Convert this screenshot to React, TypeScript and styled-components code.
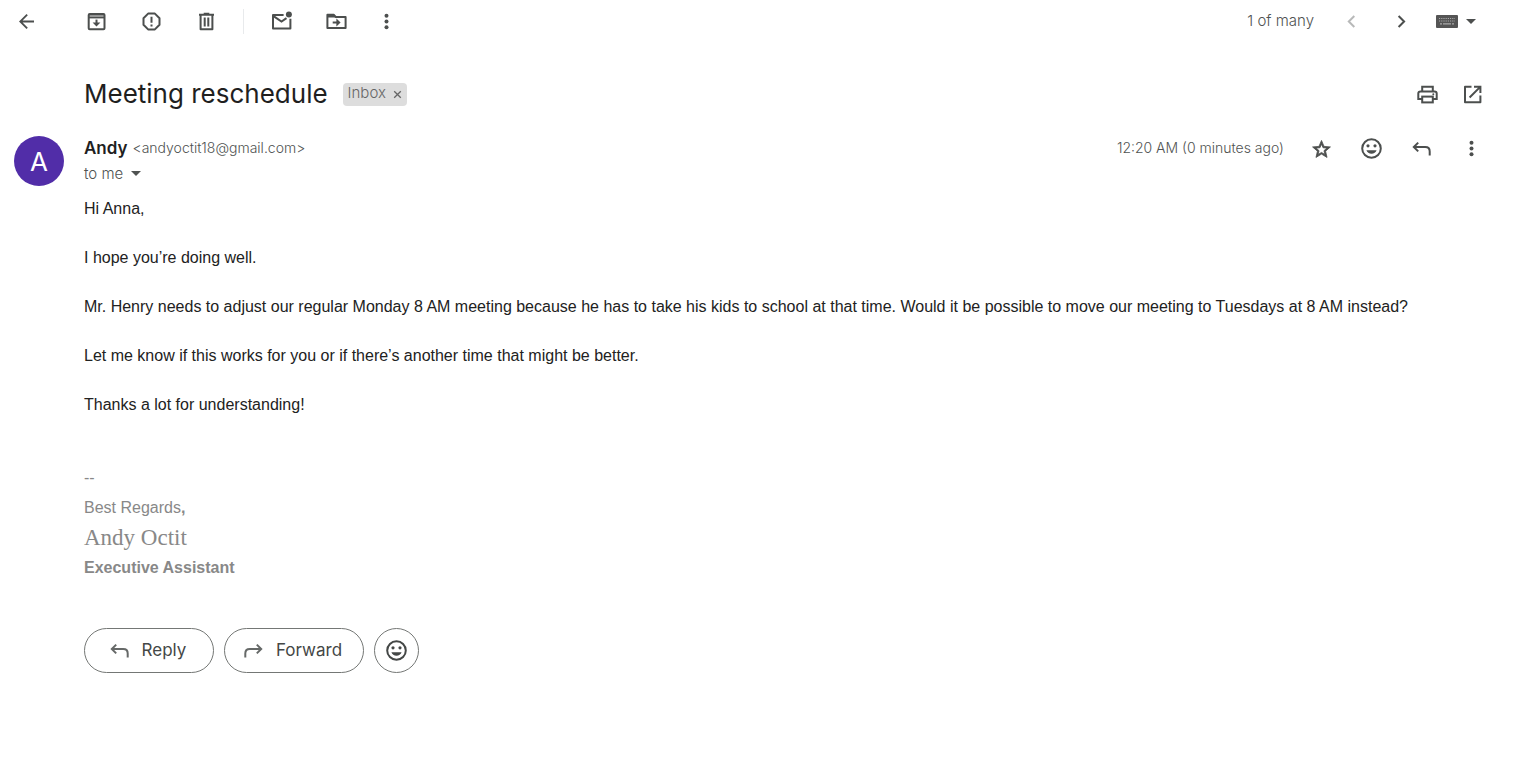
import React from "react";
import styled, { createGlobalStyle } from "styled-components";

const UI_FONT = `Inter, Roboto, "Liberation Sans", sans-serif`;
const BODY_FONT = `"Liberation Sans", Arial, sans-serif`;

const GlobalStyle = createGlobalStyle`
  *, *::before, *::after { box-sizing: border-box; }
  body { margin: 0; background: #fff; color: #222; font-family: ${UI_FONT}; }
  button { font: inherit; color: inherit; }
`;

const Toolbar = styled.header`
  display: flex;
  align-items: center;
  height: 43px;
  padding: 0 47px 0 14px;
  color: #505352;
`;

const ToolGroup = styled.div<{ $gap: number; $start?: number }>`
  display: flex;
  align-items: center;
  gap: ${(p) => p.$gap}px;
  margin-left: ${(p) => p.$start ?? 0}px;
`;

const Divider = styled.span`
  width: 1px;
  height: 25px;
  margin: 0 25px 0 24px;
  background: #e8eaec;
`;

const Spacer = styled.div`
  flex: 1;
`;

const IconButton = styled.button<{ $muted?: boolean }>`
  display: flex;
  flex: none;
  padding: 0;
  border: 0;
  background: none;
  cursor: pointer;
  color: ${(p) => (p.$muted ? "#b8b9b9" : "#4c4f4e")};
`;

const Counter = styled.span`
  margin-right: 25px;
  padding-bottom: 2px;
  font-size: 15px;
  line-height: 20px;
  font-weight: 300;
  color: #505352;
`;

const InputToolButton = styled(IconButton)`
  align-items: center;
  gap: 8px;
  margin-left: 22px;
`;

const SubjectRow = styled.div`
  display: flex;
  align-items: center;
  height: 50px;
  margin-top: 26px;
  padding: 0 38px 0 84px;
`;

const Subject = styled.h1`
  margin: 0;
  font-size: 26px;
  line-height: 36px;
  font-weight: 400;
  color: #1f1f1f;
`;

const Label = styled.span`
  display: flex;
  align-items: center;
  gap: 7px;
  height: 23px;
  margin-left: 15px;
  padding: 0 5px 2px;
  border-radius: 4px;
  background: #ddd;
  color: #666;
  font-size: 15px;
  line-height: 20px;
  font-weight: 300;
`;

const RemoveButton = styled(IconButton)`
  padding-top: 2px;
  color: #666;
`;

const Message = styled.article`
  display: grid;
  grid-template-columns: 50px minmax(0, 1fr);
  column-gap: 20px;
  margin-top: 17px;
  padding: 0 39px 24px 14px;
`;

const Avatar = styled.div`
  display: flex;
  align-items: center;
  justify-content: center;
  width: 50px;
  height: 50px;
  border-radius: 50%;
  background: #512da8;
  color: #fff;
  font-size: 26px;
  font-weight: 400;
`;

const SenderRow = styled.div`
  display: flex;
  align-items: center;
  height: 25px;
`;

const Sender = styled.h2`
  margin: 0 5px 0 0;
  padding-bottom: 2px;
  font-size: 17px;
  line-height: 24px;
  font-weight: 600;
  color: #1f1f1f;
`;

const Muted = styled.span`
  padding-bottom: 1px;
  font-size: 14px;
  line-height: 20px;
  font-weight: 300;
  color: #505352;
`;

const RecipientButton = styled.button`
  display: flex;
  align-items: center;
  gap: 8px;
  height: 25px;
  padding: 0 0 1px;
  border: 0;
  background: none;
  color: #505352;
  font-size: 15px;
  font-weight: 300;
  cursor: pointer;
`;

const Body = styled.div`
  display: grid;
  row-gap: 25px;
  margin-top: 11px;
  font-family: ${BODY_FONT};
  font-size: 16px;
  line-height: 24px;
`;

const Paragraph = styled.p`
  margin: 0;
`;

const Signature = styled.footer`
  margin-top: 46px;
  font-family: ${BODY_FONT};
  font-size: 16px;
  line-height: 30px;
  color: #888;
`;

const SignatureLine = styled.div`
  height: 30px;
`;

const SignatureName = styled(SignatureLine)`
  font-family: "Liberation Serif", "Times New Roman", serif;
  font-size: 23px;
`;

const Actions = styled.div`
  display: flex;
  gap: 10px;
  margin-top: 45px;
`;

const PillButton = styled.button<{ $width: number }>`
  display: flex;
  align-items: center;
  justify-content: center;
  gap: 10px;
  width: ${(p) => p.$width}px;
  height: 45px;
  padding: 0 5px 0 0;
  border: 1px solid #747775;
  border-radius: 23px;
  background: #fff;
  color: #444746;
  font-size: 17px;
  line-height: 24px;
  cursor: pointer;

  svg {
    color: #666968;
  }
`;

const PillText = styled.span`
  padding-bottom: 2px;
`;

const RoundButton = styled(PillButton)`
  padding: 0;

  svg {
    color: #444746;
  }
`;

type GlyphProps = { children: React.ReactNode; box?: string; w?: number; h?: number };

const Glyph = ({ children, box = "0 0 25 25", w = 25, h = 25 }: GlyphProps) => (
  <svg width={w} height={h} viewBox={box} fill="none" stroke="currentColor" strokeWidth="2" aria-hidden="true">
    {children}
  </svg>
);

const BackIcon = () => (
  <Glyph box="0 0 20 20">
    <path fill="currentColor" stroke="none" d="M16 9.25H6.87l4.19-4.19L10 4l-6 6 6 6 1.06-1.06-4.19-4.19H16z" />
  </Glyph>
);

const ArchiveIcon = () => (
  <Glyph>
    <rect x="4.7" y="4.9" width="15.8" height="15.4" rx="1" />
    <path d="M5 6.8h15" strokeWidth="2" opacity="0.6" />
    <path d="M5 8.6h15" strokeWidth="1.6" />
    <path d="M12.5 10.6v5" />
    <path d="M8.6 13.6h7.8l-3.9 4z" fill="currentColor" stroke="none" />
  </Glyph>
);

const SpamIcon = () => (
  <Glyph>
    <path d="M9.1 4.6h6.8l4.6 4.6v6.6l-4.6 4.6H9.1l-4.6-4.6V9.2z" strokeLinejoin="round" />
    <path d="M12.5 7.7v6.1M12.5 15.6v2" />
  </Glyph>
);

const TrashIcon = () => (
  <Glyph>
    <path d="M5 5.8h15M9.7 4.8h5.6" />
    <path d="M6.6 6v14.2h11.8V6" strokeLinejoin="round" />
    <path d="M10.7 8.5v9M14.3 8.5v9" />
  </Glyph>
);

const UnreadIcon = () => (
  <Glyph>
    <path d="M14.6 5.9H4v13.5h17.4V9.8" strokeLinejoin="round" />
    <path d="M4.5 7.2l8 5.3 5-3.3" />
    <circle cx="19.9" cy="5.6" r="3" fill="currentColor" stroke="none" />
  </Glyph>
);

const MoveIcon = () => (
  <Glyph>
    <path d="M3.4 5.8h6.4l2 2.2h9.8v11H3.4z" strokeLinejoin="round" />
    <path d="M3.4 5h6.6l2 3.6H3.4z" fill="currentColor" stroke="none" />
    <path d="M8.7 13.5h5" />
    <path d="M12.4 9.6l4.2 3.9-4.2 3.9z" fill="currentColor" stroke="none" />
  </Glyph>
);

const MoreIcon = () => (
  <Glyph>
    {[6.8, 12.5, 18.2].map((y) => (
      <circle key={y} cx="12.5" cy={y} r="2" fill="currentColor" stroke="none" />
    ))}
  </Glyph>
);

const PrevIcon = () => (
  <Glyph>
    <path d="M15.3 7L9.8 12.5l5.5 5.5" />
  </Glyph>
);

const NextIcon = () => (
  <Glyph>
    <path d="M9.6 7l5.5 5.5L9.6 18" />
  </Glyph>
);

const KeyboardIcon = () => (
  <Glyph w={22} h={13} box="0 0 22 13">
    <rect width="22" height="13" rx="1" fill="#555" stroke="none" />
    <path d="M3 3.5h16M3 6h16" stroke="#aaa" strokeWidth="1.2" strokeDasharray="1.2 1" />
    <path d="M4 8.8h2M7 8.8h8M16 8.8h2" stroke="#aaa" strokeWidth="1.2" />
  </Glyph>
);

const CaretIcon = () => (
  <Glyph w={10} h={5} box="0 0 10 5">
    <path d="M0 0h10L5 5z" fill="currentColor" stroke="none" />
  </Glyph>
);

const CloseIcon = () => (
  <Glyph w={9} h={9} box="0 0 9 9">
    <path d="M1.2 1.2l6.6 6.6M7.8 1.2L1.2 7.8" strokeWidth="1.3" />
  </Glyph>
);

const PrintIcon = () => (
  <Glyph>
    <path d="M7.2 9V4.7h10.6V9" />
    <path d="M7 17H3.3V11.6Q3.3 9.4 5.5 9.4h14Q21.7 9.4 21.7 11.6V17H18" />
    <rect x="7.2" y="14.6" width="10.6" height="5.8" />
    <circle cx="18.3" cy="12.2" r="1" fill="currentColor" stroke="none" />
  </Glyph>
);

const OpenIcon = () => (
  <Glyph>
    <path d="M11.5 4.7H5v15.6h15.4v-6.8" strokeLinejoin="round" />
    <path d="M14 4.7h6.4V11M20.2 4.9l-10.6 10.6" />
  </Glyph>
);

const StarIcon = () => (
  <Glyph box="-2 -3 28 28">
    <path
      fill="currentColor"
      strokeWidth="0.9"
      d="M22 9.24l-7.19-.62L12 2 9.19 8.63 2 9.24l5.46 4.73L5.82 21 12 17.27 18.18 21l-1.63-7.03zM12 15.4l-3.76 2.27 1-4.28-3.32-2.88 4.38-.38L12 6.1l1.71 4.04 4.38.38-3.32 2.88 1 4.28z"
    />
  </Glyph>
);

const SmileIcon = () => (
  <Glyph>
    <circle cx="12.5" cy="12.5" r="9.3" />
    <circle cx="9" cy="9.8" r="1.6" fill="currentColor" stroke="none" />
    <circle cx="16" cy="9.8" r="1.6" fill="currentColor" stroke="none" />
    <path d="M7.4 14.2h10.2c-.8 2.1-2.7 3.6-5.1 3.6s-4.3-1.5-5.1-3.6z" fill="currentColor" stroke="none" />
  </Glyph>
);

const ReplyIcon = () => (
  <Glyph>
    <path d="M9.2 6.6L4.8 11l4.4 4.4M5 11h11.2q4.5 0 4.5 4.4v4" />
  </Glyph>
);

const ForwardIcon = () => (
  <Glyph>
    <path d="M15.8 6.6l4.4 4.4-4.4 4.4M20 11H8.8q-4.5 0-4.5 4.4v4" />
  </Glyph>
);

const paragraphs = [
  "Hi Anna,",
  "I hope you’re doing well.",
  "Mr. Henry needs to adjust our regular Monday 8 AM meeting because he has to take his kids to school at that time. Would it be possible to move our meeting to Tuesdays at 8 AM instead?",
  "Let me know if this works for you or if there’s another time that might be better.",
  "Thanks a lot for understanding!",
];

export default function App() {
  return (
    <>
      <GlobalStyle />
      <Toolbar>
        <IconButton aria-label="Back to Inbox"><BackIcon /></IconButton>
        <ToolGroup $gap={30} $start={45}>
          <IconButton aria-label="Archive"><ArchiveIcon /></IconButton>
          <IconButton aria-label="Report spam"><SpamIcon /></IconButton>
          <IconButton aria-label="Delete"><TrashIcon /></IconButton>
        </ToolGroup>
        <Divider />
        <ToolGroup $gap={30}>
          <IconButton aria-label="Mark as unread"><UnreadIcon /></IconButton>
          <IconButton aria-label="Move to"><MoveIcon /></IconButton>
        </ToolGroup>
        <ToolGroup $gap={0} $start={25}>
          <IconButton aria-label="More"><MoreIcon /></IconButton>
        </ToolGroup>
        <Spacer />
        <Counter>1 of many</Counter>
        <ToolGroup $gap={25}>
          <IconButton aria-label="Newer" $muted><PrevIcon /></IconButton>
          <IconButton aria-label="Older"><NextIcon /></IconButton>
        </ToolGroup>
        <InputToolButton aria-label="Input tools"><KeyboardIcon /><CaretIcon /></InputToolButton>
      </Toolbar>
      <main>
        <SubjectRow>
          <Subject>Meeting reschedule</Subject>
          <Label>
            Inbox
            <RemoveButton aria-label="Remove label Inbox"><CloseIcon /></RemoveButton>
          </Label>
          <Spacer />
          <ToolGroup $gap={20}>
            <IconButton aria-label="Print"><PrintIcon /></IconButton>
            <IconButton aria-label="Open in new window"><OpenIcon /></IconButton>
          </ToolGroup>
        </SubjectRow>
        <Message>
          <Avatar>A</Avatar>
          <div>
            <SenderRow>
              <Sender>Andy</Sender>
              <Muted>&lt;andyoctit18@gmail.com&gt;</Muted>
              <Spacer />
              <Muted>12:20 AM (0 minutes ago)</Muted>
              <ToolGroup $gap={25} $start={25}>
                <IconButton aria-label="Star"><StarIcon /></IconButton>
                <IconButton aria-label="Add reaction"><SmileIcon /></IconButton>
                <IconButton aria-label="Reply"><ReplyIcon /></IconButton>
                <IconButton aria-label="More"><MoreIcon /></IconButton>
              </ToolGroup>
            </SenderRow>
            <RecipientButton>to me <CaretIcon /></RecipientButton>
            <Body>
              {paragraphs.map((text) => (
                <Paragraph key={text}>{text}</Paragraph>
              ))}
            </Body>
            <Signature>
              <SignatureLine>--</SignatureLine>
              <SignatureLine>Best Regards<b>,</b></SignatureLine>
              <SignatureName>Andy Octit</SignatureName>
              <SignatureLine><b>Executive Assistant</b></SignatureLine>
            </Signature>
            <Actions>
              <PillButton $width={130}><ReplyIcon /><PillText>Reply</PillText></PillButton>
              <PillButton $width={140}><ForwardIcon /><PillText>Forward</PillText></PillButton>
              <RoundButton $width={45} aria-label="Add reaction"><SmileIcon /></RoundButton>
            </Actions>
          </div>
        </Message>
      </main>
    </>
  );
}
